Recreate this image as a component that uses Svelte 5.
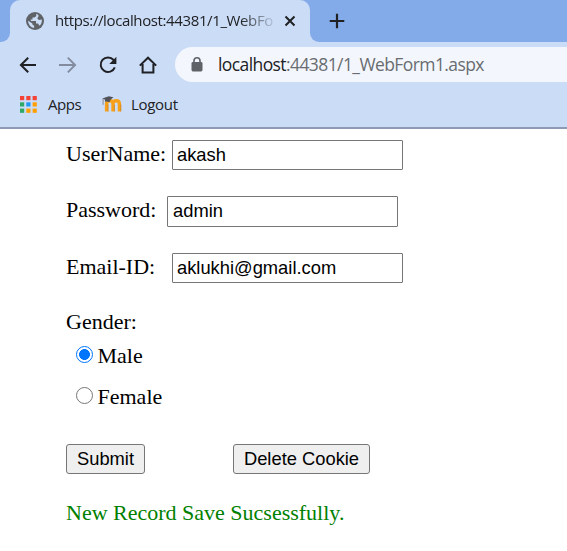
<script>
  let username = $state('akash');
  let password = $state('admin');
  let email = $state('aklukhi@gmail.com');
  let gender = $state('Male');
  const dots = ['#f44336', '#f44336', '#f44336', '#2fa866', '#2196f3', '#ffa000', '#2fa866', '#ffa000', '#ffa000'];
</script>

<div class="window">
  <header class="tabs">
    <div class="strip"><span class="curve"></span></div>
    <div class="tab">
      <svg class="globe" width="18" height="18" viewBox="0 0 18 18">
        <circle cx="9" cy="9" r="9" fill="#5f6368" />
        <path d="M10 2.1 10.4 4 8.4 5.5H6.5V7.4H4.8V9H10V11.6H12L13.5 13.7A7 7 0 0 0 15.8 7.5L13 8 11.3 6.4 12.6 4 12.2 2.8A7 7 0 0 0 10 2.1ZM2.1 8.7A7 7 0 0 0 8.1 15.9V13.8L6.4 12.6V11.4Z" fill="#cbdcf6" />
      </svg>
      <span class="title">https://localhost:44381/1_WebFo</span>
      <svg class="close" width="12" height="12" viewBox="0 0 12 12"><path d="m1.5 1.5 9 9m0-9-9 9" stroke="#202124" stroke-width="2" /></svg>
    </div>
    <div class="strip rest">
      <span class="curve right"></span>
      <svg class="plus" width="16" height="16" viewBox="0 0 16 16"><path d="M8 .7v14.6M.7 8h14.6" stroke="#202124" stroke-width="2.2" /></svg>
    </div>
  </header>

  <nav class="toolbar">
    <svg width="18" height="18" viewBox="0 0 18 18" fill="none" stroke="#202124" stroke-width="2"><path d="M17 9H2M9.2 1.7 1.9 9l7.3 7.3" /></svg>
    <svg width="18" height="18" viewBox="0 0 18 18" fill="none" stroke="#838c9e" stroke-width="1.9"><path d="M0 9h15.5M8.8 1.7 16.1 9l-7.3 7.3" /></svg>
    <svg width="18" height="18" viewBox="0 0 18 18"><path d="M14.6 4A7.3 7.3 0 1 0 15.8 11.4" fill="none" stroke="#202124" stroke-width="2" /><path d="M17.4.8v7.1h-7.1Z" fill="#202124" /></svg>
    <svg width="18" height="18" viewBox="0 0 18 18" fill="none" stroke="#202124" stroke-width="2"><path d="M.8 9.6 9 1.7l8.2 7.9M3.6 8v8.5h10.8V8" /></svg>
    <div class="address">
      <svg width="12" height="15" viewBox="0 0 12 15"><rect x=".5" y="5" width="11" height="9.4" rx="1.4" fill="#5f6368" /><path d="M3 6V3.8a3 3 0 0 1 6 0V6" fill="none" stroke="#5f6368" stroke-width="1.6" /></svg>
      <span class="url"><b>localhost</b>:44381/1_WebForm1.aspx</span>
    </div>
  </nav>

  <nav class="bookmarks">
    <svg class="apps" width="17" height="17" viewBox="0 0 17 17">
      {#each dots as color, i}
        <rect x={(i % 3) * 6.3} y={Math.floor(i / 3) * 6.3} width="4.2" height="4.2" fill={color} />
      {/each}
    </svg>
    <span class="apps-label">Apps</span>
    <svg class="moodle" width="20" height="17" viewBox="0 0 20 17">
      <path d="M4.6 15.4V7.8q0-3 3.2-3t3.2 3v7.6m0-7.6q0-3 3.2-3t3.2 3v7.6" fill="none" stroke="#f7a11b" stroke-width="3.4" />
      <path d="M6 15.4V8.5m6.4 6.9V8.5m6.4 6.9V8.5" stroke="#c98222" stroke-width=".7" />
      <path d="M.2 2.5 6.8.2l4.6 1-2.9 2.6-.8 2.2-4.6-.4-.2-2.1Z" fill="#51525a" />
      <path d="M1.1 2.8v6" stroke="#8a8a90" stroke-width="1" />
    </svg>
    <span class="logout-label">Logout</span>
  </nav>

  <main>
    <div class="field"><label for="user">UserName:</label><input id="user" bind:value={username} /></div>
    <div class="field password"><label for="pass">Password:</label><input id="pass" bind:value={password} /></div>
    <div class="field"><label for="mail">Email-ID:</label><input id="mail" bind:value={email} /></div>
    <div class="gender">Gender:</div>
    <label class="option"><input type="radio" value="Male" bind:group={gender} />Male</label>
    <label class="option female"><input type="radio" value="Female" bind:group={gender} />Female</label>
    <div class="actions"><button class="submit">Submit</button><button class="delete">Delete Cookie</button></div>
    <p>New Record Save Sucsessfully.</p>
  </main>
</div>

<style>
  :global(body) { margin: 0; background: #fff; }
  .window { width: 567px; height: 551px; overflow: hidden; background: #fff; font-family: "Open Sans", "Noto Sans", sans-serif; color: #202124; }
  svg { display: block; flex: none; }
  .tabs { display: flex; height: 42px; background: linear-gradient(#84abe9 0 14px, #cbdcf6 14px); }
  .strip { width: 10px; background: #cbdcf6; }
  .curve { display: block; width: 10px; height: 42px; background: #84abe9; border-bottom-right-radius: 9px; }
  .tab { box-sizing: border-box; width: 300px; display: flex; align-items: center; padding-left: 16px; background: #cbdcf6; border-radius: 10px 10px 0 0; }
  .title { width: 219px; margin-left: 11px; white-space: nowrap; font-size: 15px; letter-spacing: -.38px; line-height: 22px; padding-bottom: 2px; mask-image: linear-gradient(90deg, #000 185px, transparent 223px); }
  .close { margin-left: 10px; }
  .rest { flex: 1; display: flex; }
  .right { flex: 1; border-radius: 0 0 0 9px; }
  .plus { width: 16px; margin: 13px 222px 0 -238px; }
  .toolbar { box-sizing: border-box; height: 45px; display: flex; align-items: center; gap: 22px; padding: 0 0 0 19px; background: #cbdcf6; }
  .address { flex: 1; height: 35px; margin: 0 0 0 -4px; padding-left: 16px; display: flex; align-items: center; background: #f3f7fd; border-radius: 18px 0 0 18px; }
  .url { margin-left: 15px; color: #696c70; font-size: 17.5px; letter-spacing: -.59px; line-height: 24px; padding-bottom: 2px; white-space: nowrap; }
  .url b { font-weight: 400; color: #202124; }
  .bookmarks { box-sizing: border-box; height: 42px; display: flex; align-items: center; padding: 0 0 5px 20px; background: #cbdcf6; border-bottom: 2px solid #8c9bb3; font-size: 15px; line-height: 22px; }
  .bookmarks span { padding-bottom: 2px; }
  .apps-label { width: 34px; margin-left: 11px; letter-spacing: -.45px; }
  .moodle { margin-left: 20px; }
  .logout-label { margin-left: 9px; letter-spacing: -.3px; }
  main { padding: 11px 0 0 66px; color: #000; font: 22px/30px "Liberation Serif", serif; }
  .field { display: flex; height: 30px; margin-bottom: 26px; }
  .field label { width: 106px; line-height: 27px; white-space: nowrap; }
  .field.password { height: 31px; }
  .field.password label { width: 101px; }
  .field input { box-sizing: border-box; width: 231px; height: 100%; margin: 0; padding: 1px 4px; border: 1px solid #767676; border-radius: 1px; background: #fff; color: #000; font: 18.33px "Liberation Sans", sans-serif; outline: 0; }
  .field.password input { padding: 0 5px 2px; }
  .gender { height: 30px; line-height: 26px; }
  .option { display: flex; align-items: center; width: 120px; height: 33px; padding-left: 10px; line-height: 33px; }
  .option.female { margin-top: 8px; }
  .option input { appearance: none; box-sizing: border-box; width: 17px; height: 17px; margin: 0 4.5px 2px 0; border: 1px solid #767676; border-radius: 50%; background: #fff; }
  .option input:checked { border-color: #0075ff; background: radial-gradient(circle, #0075ff 0 5.1px, transparent 5.7px); }
  .actions { display: flex; gap: 88px; margin-top: 31px; }
  button { box-sizing: border-box; height: 30px; padding: 0 0 1px; border: 1px solid #767676; border-radius: 3px; background: #efefef; color: #000; font: 18.33px "Liberation Sans", sans-serif; white-space: nowrap; }
  .submit { width: 79px; }
  .delete { width: 137px; }
  p { margin: 24px 0 0; color: green; line-height: 30px; }
</style>
